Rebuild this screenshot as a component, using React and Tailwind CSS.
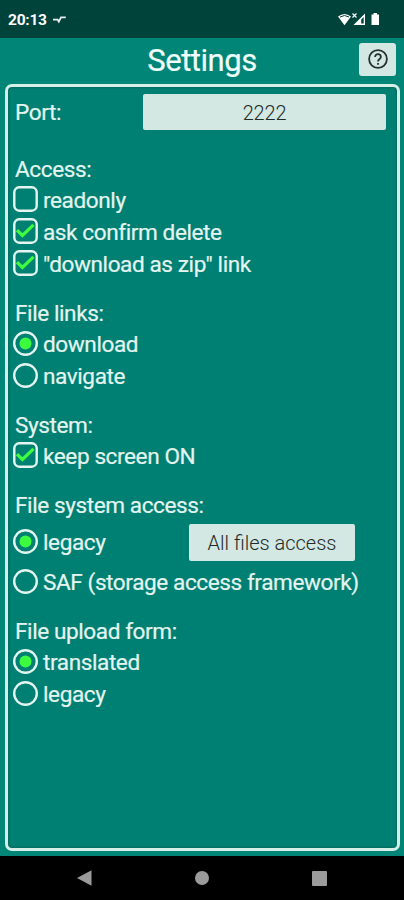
import React, { useState } from 'react';

const App = () => {
  const [access, setAccess] = useState({ readonly: false, confirm: true, zip: true });
  const [links, setLinks] = useState('download');
  const [screenOn, setScreenOn] = useState(true);
  const [fileSystem, setFileSystem] = useState('legacy');
  const [uploadForm, setUploadForm] = useState('translated');

  const toggle = (key) => setAccess({ ...access, [key]: !access[key] });

  return (
    <div className="flex h-[900px] w-[404px] flex-col overflow-hidden bg-[#008577] font-['Roboto',sans-serif] text-[#e4f5f0]">
      <StatusBar />
      <header className="grid h-[46px] flex-shrink-0 grid-cols-[1fr_auto_1fr] items-center pr-2 pl-2">
        <h1 className="col-start-2 text-[31px] leading-[46px] tracking-[-0.45px] text-[#f0fffb] [-webkit-text-stroke:0.2px]">Settings</h1>
        <button className="mt-[-4px] flex h-[33px] w-[37px] items-center justify-center justify-self-end rounded-[3px] bg-[#d3e8e3] text-[#26302e]" aria-label="Help">
          <HelpIcon />
        </button>
      </header>

      <main className="mr-1 mb-[5px] ml-[5px] flex flex-1 flex-col rounded-[7px] border-[3px] border-[#d5eee8] bg-[#008073] pt-[7px] pl-[5px] text-[22.6px] tracking-[-0.42px] shadow-[inset_0_0_3px_#00554b]">
        <div className="mb-[25px] flex h-[36px] items-center pr-[11px] pl-[2px]">
          <span className="w-[128px] pt-[2px] [-webkit-text-stroke:0.2px]">Port:</span>
          <button className="h-[36px] flex-1 rounded-[2px] bg-[#d3e8e3] pt-px text-[20px] font-light tracking-[-0.2px] text-[#1f2b29]">2222</button>
        </div>

        <Section title="Access:">
          <Option label="readonly" checked={access.readonly} onClick={() => toggle('readonly')} />
          <Option label="ask confirm delete" checked={access.confirm} onClick={() => toggle('confirm')} />
          <Option label={'"download as zip" link'} checked={access.zip} onClick={() => toggle('zip')} />
        </Section>

        <Section title="File links:">
          <Option radio label="download" checked={links === 'download'} onClick={() => setLinks('download')} />
          <Option radio label="navigate" checked={links === 'navigate'} onClick={() => setLinks('navigate')} />
        </Section>

        <Section title="System:">
          <Option label="keep screen ON" checked={screenOn} onClick={() => setScreenOn(!screenOn)} />
        </Section>

        <Section title="File system access:">
          <div className="mt-1 mb-1 flex h-[38px] items-end">
            <div className="w-[176px] pb-1">
              <Option radio label="legacy" checked={fileSystem === 'legacy'} onClick={() => setFileSystem('legacy')} />
            </div>
            <button className="h-[37px] w-[166px] rounded-[2px] bg-[#d3e8e3] pt-px text-[20px] font-light tracking-normal text-[#1f2b29]">All files access</button>
          </div>
          <Option radio label="SAF (storage access framework)" checked={fileSystem === 'saf'} onClick={() => setFileSystem('saf')} />
        </Section>

        <Section title="File upload form:">
          <Option radio label="translated" checked={uploadForm === 'translated'} onClick={() => setUploadForm('translated')} />
          <Option radio label="legacy" checked={uploadForm === 'legacy'} onClick={() => setUploadForm('legacy')} />
        </Section>
      </main>

      <NavBar />
    </div>
  );
};

const Section = ({ title, children }) => (
  <section className="mb-5">
    <h2 className="pt-[2px] pl-[2px] leading-[26px] [-webkit-text-stroke:0.2px]">{title}</h2>
    {children}
  </section>
);

const Option = ({ label, checked, radio, onClick }) => (
  <button
    type="button"
    role={radio ? 'radio' : 'checkbox'}
    aria-checked={checked}
    onClick={onClick}
    className="flex h-8 items-center gap-[5px] text-left whitespace-nowrap"
  >
    {radio ? <RadioMark checked={checked} /> : <CheckMark checked={checked} />}
    <span className="pt-[3px] leading-[29px] [-webkit-text-stroke:0.2px]">{label}</span>
  </button>
);

const RadioMark = ({ checked }) => (
  <svg className="h-[25px] w-[25px] flex-shrink-0" viewBox="0 0 25 25" fill="none">
    <circle cx="12.5" cy="12.5" r="11.3" stroke="#e4f5f0" strokeWidth="2.4" />
    {checked && <circle cx="12.5" cy="12.5" r="6" fill="#3dfc40" />}
  </svg>
);

const CheckMark = ({ checked }) => (
  <svg className="h-[26px] w-[25px] flex-shrink-0" viewBox="0 0 25 26" fill="none">
    <rect x="1.3" y="1.3" width="22.4" height="23.4" rx="5" stroke="#e4f5f0" strokeWidth="2.4" />
    {checked && <path d="M4 12.2L9.4 17.5L20.5 6.8" stroke="#3dfc40" strokeWidth="3.2" />}
  </svg>
);

const HelpIcon = () => (
  <svg className="h-5 w-5" viewBox="0 0 20 20" fill="none" stroke="currentColor" strokeWidth="1.8">
    <circle cx="10" cy="10" r="8.9" />
    <path d="M7.1 8A2.9 2.9 0 0 1 12.9 8C12.9 9.9 10 10.1 10 12.5" />
    <path d="M10 14V15.8" />
  </svg>
);

const StatusBar = () => (
  <div className="flex h-[38px] flex-shrink-0 items-center bg-[#00433b] pr-[24px] pl-[8px] text-white">
    <span className="pt-[2px] text-[15.5px] leading-[36px] font-bold tracking-[-0.25px]">20:13</span>
    <svg className="ml-[6px] h-[9px] w-[13px]" viewBox="0 0 13 9" fill="none" stroke="#e6eeec" strokeWidth="1.8">
      <path d="M0 4.6H4.5L5.8 6.6L8 2.4H12.8" />
    </svg>
    <svg className="ml-auto h-4 w-[46px]" viewBox="0 0 46 16" fill="none">
      <path d="M4 5.5Q10.5 0.5 17 5.5L10.5 14.2Z" fill="white" />
      <path d="M6 6Q10.5 3 15 6" stroke="#00433b" strokeWidth="1" />
      <path d="M18.5 2.5L22.5 6.5M22.5 2.5L18.5 6.5" stroke="white" strokeWidth="1.2" />
      <path d="M19.5 14L31 2.5V14Z" fill="white" />
      <path d="M27.2 8.5L29.7 6V12.5H27.2Z" fill="#00433b" />
      <path d="M39.5 2H43V3.5H45V14H37.5V3.5H39.5Z" fill="white" />
    </svg>
  </div>
);

const NavBar = () => (
  <nav className="grid h-[44px] flex-shrink-0 grid-cols-3 items-center bg-black pr-[26px] pl-[26px]">
    <svg className="h-4 w-[15px] justify-self-center" viewBox="0 0 15 16" fill="#9b9b9b">
      <path d="M0 8L14.5 0.3V15.7Z" />
    </svg>
    <span className="h-[14px] w-[14px] justify-self-center rounded-full bg-[#9b9b9b]" />
    <span className="h-[15px] w-[15px] justify-self-center rounded-[1px] bg-[#9b9b9b]" />
  </nav>
);

export default App;
